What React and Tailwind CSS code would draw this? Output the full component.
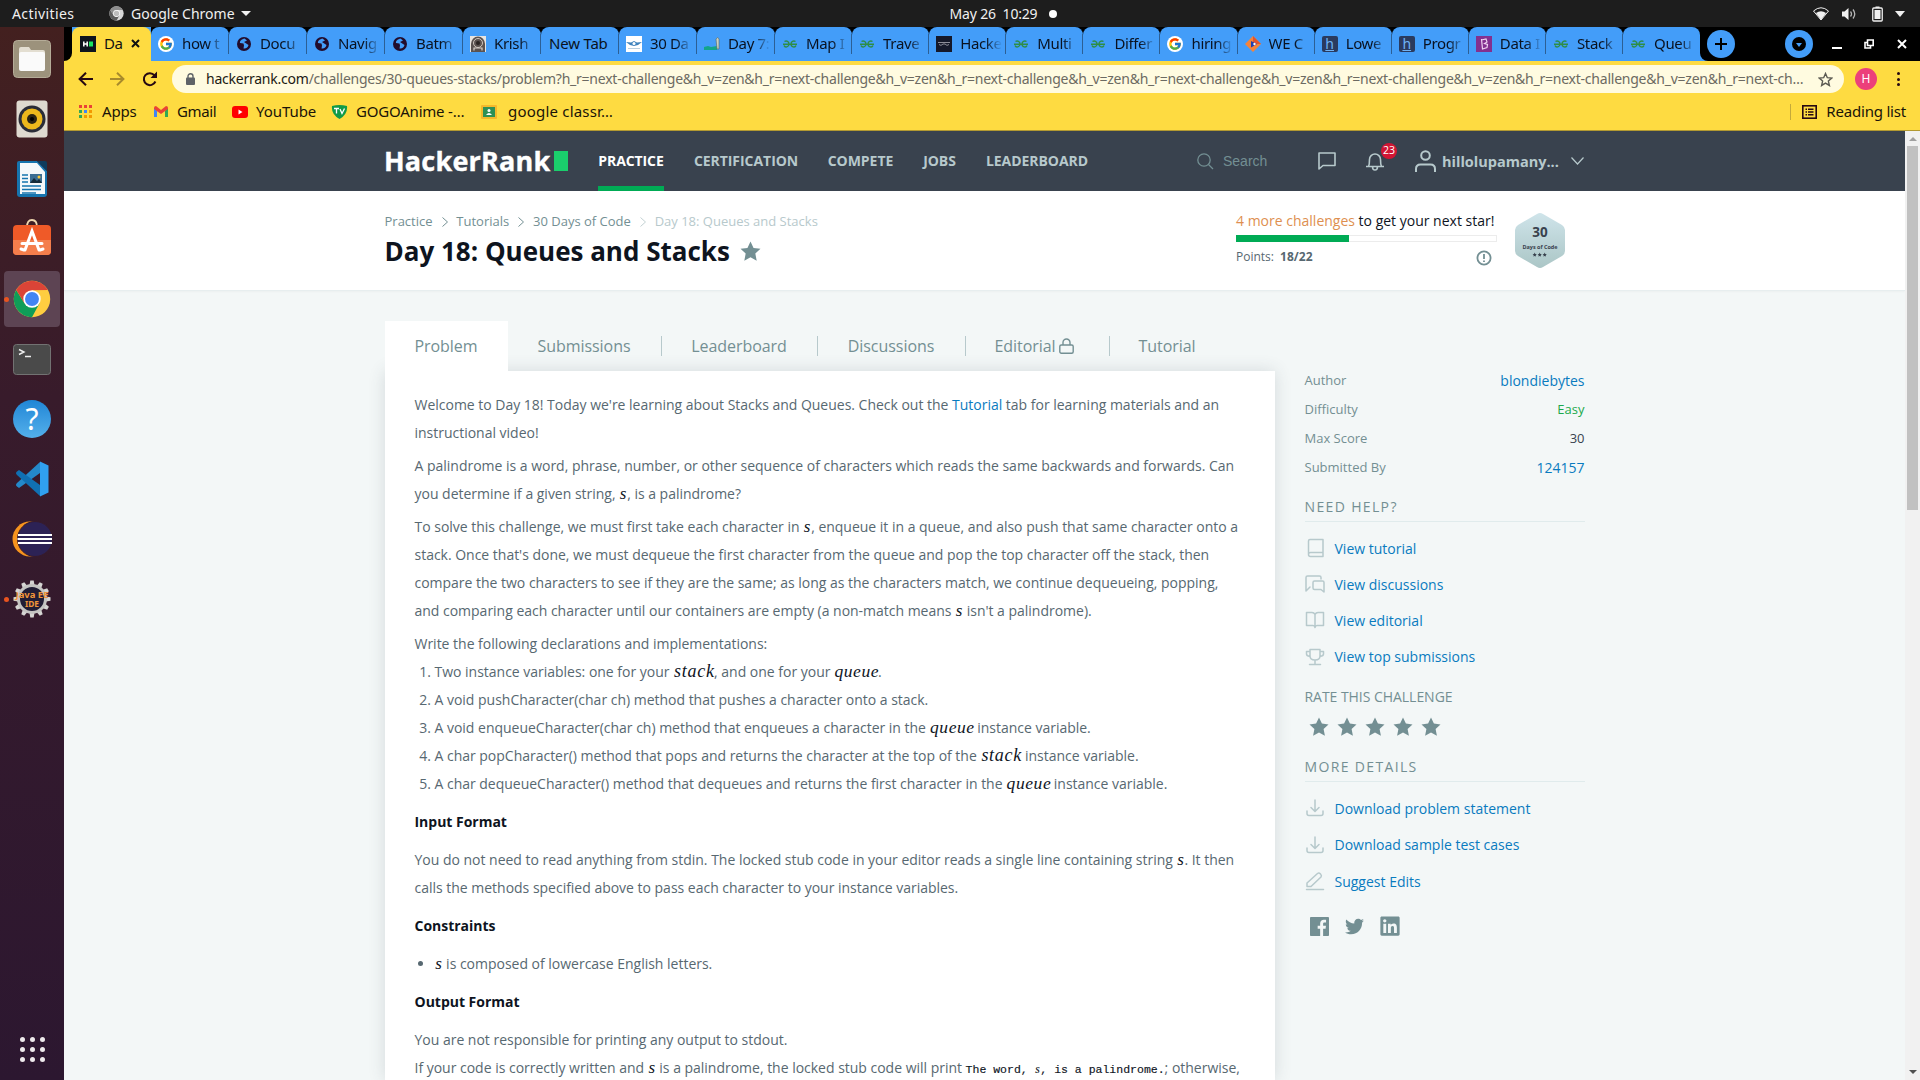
import React from "react";
import { FcGoogle } from "react-icons/fc";
import { FaTwitter, FaLinkedin } from "react-icons/fa";

const UI = "font-['Noto_Sans','Open_Sans',sans-serif]";

function ChromeLogo({ size, gray }) {
  const c = gray ? ["#8c8c8c", "#5c5c5c", "#d8d8d8", "#bdbdbd"] : ["#db4437", "#0f9d58", "#ffcd40", "#4285f4"];
  return (
    <svg width={size} height={size} viewBox="0 0 48 48">
      <circle cx="24" cy="24" r="23" fill={c[2]} />
      <path d="M24 24 L4.1 12.5 A23 23 0 0 1 43.9 12.5 L24 13 Z" fill={c[0]} />
      <path d="M4.1 12.5 A23 23 0 0 0 24 47 L33.5 29.5 L24 34 L14.5 29.5 Z" fill={c[1]} />
      <path d="M4.1 12.5 L14.5 29.5 L24 13.5 Z" fill={c[0]} />
      <circle cx="24" cy="24" r="11" fill="#fff" />
      <circle cx="24" cy="24" r="8.8" fill={c[3]} />
    </svg>
  );
}

function Favicon({ kind }) {
  switch (kind) {
    case "hr":
      return (
        <svg width="16" height="16" viewBox="0 0 16 16"><rect width="16" height="16" fill="#0e141e" /><path d="M3.800 5.500v5M7.200 5.500v5M4 8h3" stroke="#fff" strokeWidth="1.500" /><rect x="9" y="5.500" width="4" height="5" fill="#1ee35f" /></svg>
      );
    case "google":
      return <span className="flex h-4 w-4 items-center justify-center rounded-full bg-white"><FcGoogle size={14} /></span>;
    case "globe":
      return (
        <svg width="16" height="16" viewBox="0 0 16 16"><circle cx="8" cy="8" r="7" fill="#220c2c" /><path d="M8.500 2.500C6 3 3.500 5 4 7l3.500.5.5 2-.5 3c2.500.5 4.500-1 5-3.500L9.500 7 8 6l3-1.500z" fill="#439df9" /></svg>
      );
    case "krishna":
      return (
        <svg width="16" height="16" viewBox="0 0 16 16"><rect width="16" height="16" fill="#e8e4e0" /><path d="M1 16V8a7 7.500 0 0 1 14 0v8z" fill="#5b5250" /><circle cx="8" cy="7" r="4.500" fill="none" stroke="#cfc6c0" /><circle cx="8" cy="7" r="2" fill="#2b2422" /><path d="M4 14.500V12h8v2.500" fill="none" stroke="#d8d0ca" strokeWidth="1.200" /></svg>
      );
    case "wings":
      return (
        <svg width="16" height="16" viewBox="0 0 16 16"><rect width="16" height="16" fill="#fff" /><path d="M0 6l5 .5L8 5l3 1.500L16 6l-4 3-4 1-4-1z" fill="#3f83bd" /><circle cx="8" cy="7.500" r="1.500" fill="#fff" /><path d="M2 12.500h12" stroke="#b9cfe0" /></svg>
      );
    case "tree":
      return (
        <svg width="16" height="16" viewBox="0 0 16 16"><path d="M0 11l4-1 3 1 6-1v4H0z" fill="#12a58a" /><path d="M12 3q2-3 3 0v10h-2z" fill="#c9d3c4" stroke="#57615a" strokeWidth=".6" /></svg>
      );
    case "gfg":
      return (
        <svg width="16" height="16" viewBox="0 0 16 16" fill="none" stroke="#2f8d46" strokeWidth="1.400"><path d="M1 8.300h14M2.500 5.500c2-1.300 4.500 0 4.500 2.500 0 3.200-4 4-5 1.500M13.500 5.500C11.500 4.200 9 5.500 9 8c0 3.200 4 4 5 1.500" /></svg>
      );
    case "dark":
      return (
        <svg width="16" height="16" viewBox="0 0 16 16"><rect width="16" height="16" fill="#15192b" /><path d="M2 6.500h12M3 8.500q2 2 4-.5h2q2 2.500 4 .5" fill="none" stroke="#8c8d99" /></svg>
      );
    case "clan":
      return (
        <svg width="16" height="16" viewBox="0 0 16 16"><path d="M8 0l8 8-8 8-8-8z" fill="#f5833a" /><path d="M8 0v8h8z" fill="#e2542f" /><path d="M6 5l6 3-6 3.500z" fill="#1f3fb0" /><circle cx="9.500" cy="8" r="1.200" fill="#fff" /></svg>
      );
    case "h":
      return (
        <span className="flex h-4 w-4 items-center justify-center rounded-[2px] bg-[#2a3a5e] text-[14px] leading-none text-[#6fb2f5] underline">h</span>
      );
    default:
      return (
        <svg width="16" height="16" viewBox="0 0 16 16"><rect width="16" height="16" fill="#83308f" /><path d="M5.500 3l1 10 4.500-1.500.5-3L8.500 7.500 11 6l-1-3-4.500 1" fill="none" stroke="#f0d4f2" strokeWidth="1.200" /></svg>
      );
  }
}

const tabs = [
  ["google", "how t"], ["globe", "Docu"], ["globe", "Navig"], ["globe", "Batm"], ["krishna", "Krish"], ["", "New Tab"],
  ["wings", "30 Da"], ["tree", "Day 7:"], ["gfg", "Map I"], ["gfg", "Trave"], ["dark", "Hacke"], ["gfg", "Multi"],
  ["gfg", "Differ"], ["google", "hiring"], ["clan", "WE C"], ["h", "Lowe"], ["h", "Progr"], ["b", "Data I"], ["gfg", "Stack"], ["gfg", "Queu"],
];

function TopBar() {
  return (
    <div className="flex h-[27px] items-center justify-between bg-[#1d1d1d] text-[14px] text-[#f0f0f0]">
      <div className="flex w-[640px] items-center pl-3">
        <span className="w-[97px] tracking-[0.4px]">Activities</span>
        <ChromeLogo size={15} gray />
        <span className="ml-[7px] whitespace-nowrap tracking-[0.020px]">Google Chrome</span>
        <span className="ml-1.5 border-x-[5px] border-t-[5px] border-x-transparent border-t-[#f0f0f0]" />
      </div>
      <div className="flex items-center pl-[87px]">
        <span className="whitespace-pre tracking-[-0.2px]">May 26  10:29</span>
        <span className="ml-3 h-2 w-2 rounded-full bg-white" />
      </div>
      <div className="flex w-[640px] items-center justify-end pr-[15px]">
        <svg width="16" height="14" viewBox="0 0 16 14"><path d="M0.500 4Q8-2.500 15.500 4L8 13z" fill="none" stroke="#f0f0f0" /><path d="M3 6Q8 2.500 13 6L8 13z" fill="#f0f0f0" /></svg>
        <svg className="ml-3" width="16" height="14" viewBox="0 0 16 14"><path d="M1 4.500h2.500L7.500 1v12L3.500 9.500H1z" fill="#f0f0f0" /><path d="M9.500 4.500q2 2.500 0 5M12 2.500q3.500 4.500 0 9" fill="none" stroke="#b5b5b5" strokeWidth="1.300" /></svg>
        <svg className="ml-[15px]" width="11" height="16" viewBox="0 0 11 16"><path d="M3.500 2V.5h4V2" fill="#f0f0f0" /><rect x=".75" y="2" width="9.500" height="13" rx="1" fill="none" stroke="#f0f0f0" strokeWidth="1.300" /><rect x="2.500" y="4" width="6" height="9" fill="#f0f0f0" /></svg>
        <span className="ml-3 border-x-[5px] border-t-[6px] border-x-transparent border-t-[#f0f0f0]" />
      </div>
    </div>
  );
}

function DockItem({ children, active, running }) {
  return (
    <div className={`relative flex h-14 w-14 shrink-0 items-center justify-center rounded-[4px] ${active ? "bg-[#5d4453]" : ""}`}>
      {running && <span className="absolute left-0 h-[5px] w-[5px] rounded-full bg-[#e95420]" />}
      {children}
    </div>
  );
}

const GEAR_TEETH = [0, 30, 60, 90, 120, 150, 180, 210, 240, 270, 300, 330];

function Dock() {
  return (
    <aside className="flex w-16 shrink-0 flex-col items-center gap-1 bg-linear-to-b from-[#43201f] via-[#381b2b] via-35% to-[#2c1730] pt-1">
      <DockItem>
        <svg width="38" height="38" viewBox="0 0 38 38"><rect x=".5" y=".5" width="37" height="37" rx="4" fill="#9c927c" stroke="#b5ac98" /><path d="M6 9q0-2 2-2h8l2 3h12q2 0 2 2v16q0 2-2 2H8q-2 0-2-2z" fill="#e3ded1" /><rect x="6" y="12" width="26" height="19" rx="2" fill="#fafafa" /></svg>
      </DockItem>
      <DockItem>
        <svg width="32" height="38" viewBox="0 0 32 38"><rect x=".5" y=".5" width="31" height="37" rx="3" fill="#dedad0" /><circle cx="16" cy="19" r="13.500" fill="#2a2d38" /><circle cx="16" cy="19" r="10.500" fill="#edb81c" /><circle cx="16" cy="19" r="5" fill="#2b2413" /><circle cx="16" cy="19" r="2" fill="#000" /></svg>
      </DockItem>
      <DockItem>
        <svg width="32" height="38" viewBox="0 0 32 38"><path d="M3 1h18l10 10v23q0 3-3 3H4q-3 0-3-3V3q0-2 2-2z" fill="#1674ae" /><path d="M4 3h17l8 9v22H4z" fill="#f5f8fa" /><path d="M21 1h8q2 0 2 2v8z" fill="#0e3b5c" /><path d="M6 15h6M6 18.500h6M6 22h6M6 26h19M6 29.500h19M6 33h14" stroke="#1674ae" strokeWidth="1.500" /><rect x="14" y="14" width="12" height="9" fill="#3b6d92" /><path d="M14 23l4-5 3 3 2-2 3 4z" fill="#152c3b" /><circle cx="23" cy="17" r="1.500" fill="#f9c83a" /></svg>
      </DockItem>
      <DockItem>
        <svg className="mb-1" width="38" height="38" viewBox="0 0 38 38"><path d="M14 9q0-7 5-7t5 7" fill="none" stroke="#f1d9b0" strokeWidth="1.800" /><rect x="0" y="7" width="38" height="30" rx="4" fill="#ef5a28" /><path d="M0 22h38v11q0 4-4 4H4q-4 0-4-4z" fill="#f47e4c" /><path d="M12 32l7-19 7 19M9 25.500h20M8 31l3 1M30 31l-3 1" fill="none" stroke="#fff" strokeWidth="3" strokeLinecap="round" /></svg>
      </DockItem>
      <DockItem active running><ChromeLogo size={38} /></DockItem>
      <DockItem>
        <svg width="38" height="31" viewBox="0 0 38 31"><rect x=".5" y=".5" width="37" height="30" rx="3" fill="#4a4a4a" stroke="#727272" /><path d="M6 5.500l5 2.500-5 2.500M12 12.500h6" fill="none" stroke="#eee" strokeWidth="1.400" /></svg>
      </DockItem>
      <DockItem>
        <div className="flex h-[38px] w-[38px] items-center justify-center rounded-full bg-linear-to-b from-[#1f86d6] to-[#53b0eb] text-[30px] leading-none text-white">?</div>
      </DockItem>
      <DockItem>
        <svg width="36" height="36" viewBox="0 0 36 36"><path d="M26 1L3 22q-2 2 0 3.500l2 1.500 21-15z" fill="#2489ca" /><path d="M3 10.500l2-1.500 21 15v11L3 14q-2-2 0-3.500z" fill="#1070b3" /><path d="M26 .5l8.500 4v27l-8.500 4z" fill="#30a0f0" /></svg>
      </DockItem>
      <DockItem>
        <svg width="40" height="36" viewBox="0 0 40 36"><circle cx="18" cy="18" r="17.500" fill="#f7941e" /><circle cx="23" cy="18" r="17.500" fill="#2c2255" stroke="#381b2b" /><path d="M6 14h34M5.500 18h35M6 22h34" stroke="#fff" strokeWidth="2" /></svg>
      </DockItem>
      <DockItem running>
        <svg width="38" height="38" viewBox="0 0 38 38">
          {GEAR_TEETH.map((a) => <path key={a} transform={`rotate(${a} 19 19)`} d="M16.500 5l.8-4.500h3.400l.8 4.500z" fill="#d5d5d3" />)}
          <circle cx="19" cy="19" r="13.500" fill="#211d35" stroke="#c4c4c2" strokeWidth="3" />
          <text x="19" y="18" textAnchor="middle" fontSize="8.500" fontWeight="700" fill="#f0953a" textLength="33" lengthAdjust="spacingAndGlyphs">Java EE</text>
          <text x="19" y="26.500" textAnchor="middle" fontSize="8.500" fontWeight="700" fill="#f0953a" textLength="14" lengthAdjust="spacingAndGlyphs">IDE</text>
        </svg>
      </DockItem>
      <div className="mt-auto mb-[18px] grid grid-cols-3 gap-[5px]">
        {Array.from({ length: 9 }).map((_, i) => <span key={i} className="h-[5px] w-[5px] rounded-full bg-[#eeeaec]" />)}
      </div>
    </aside>
  );
}

function TabStrip() {
  return (
    <div className="flex h-[34px] bg-black">
      <div className="flex w-2 shrink-0 items-end bg-[#fedb41]"><div className="h-full w-full rounded-br-lg bg-black" /></div>
      <div className="flex w-[79px] shrink-0 bg-[#439df9]">
        <div className="flex w-full items-center rounded-t-lg bg-[#fedb41] pb-px pl-2">
          <Favicon kind="hr" />
          <span className="ml-2 w-[20px] whitespace-nowrap text-[15px] tracking-[-0.4px] text-[#111]">Da</span>
          <svg className="ml-[7px]" width="9" height="9" viewBox="0 0 9 9"><path d="M1 1l7 7M8 1L1 8" stroke="#111" strokeWidth="2" /></svg>
        </div>
      </div>
      {tabs.map(([icon, label], i) => (
        <div key={i} className={`flex shrink-0 items-center rounded-t-lg bg-[#439df9] pb-px ${i < 8 ? "w-[78px]" : "w-[77.1px]"}`}>
          <div className={`flex h-full min-w-0 flex-1 items-center ${icon ? "pl-[7px]" : "pl-[8px]"}`}>
            {icon && <span className="mr-2 shrink-0"><Favicon kind={icon} /></span>}
            <span className={`whitespace-nowrap text-[15px] text-[#0a1220] ${icon ? "w-[43px] [mask-image:linear-gradient(to_right,black_60%,transparent_98%)] tracking-[-0.35px]" : "tracking-[-0.2px]"}`}>{label}</span>
          </div>
          {i < 19 && <div className="h-5 w-px bg-[#2c5f95]" />}
        </div>
      ))}
      <div className="flex w-2 shrink-0 bg-[#439df9]"><div className="h-full w-full rounded-bl-lg bg-black" /></div>
      <div className="flex flex-1 items-center">
        <div className="-ml-px flex h-7 w-7 items-center justify-center rounded-full bg-[#439df9]"><svg width="12" height="12" viewBox="0 0 12 12"><path d="M6 0v12M0 6h12" stroke="#000" strokeWidth="2" /></svg></div>
        <div className="ml-[50px] flex h-7 w-7 items-center justify-center rounded-full bg-[#439df9]"><div className="flex h-3.5 w-3.5 items-center justify-center rounded-full bg-black"><span className="mt-px border-x-[3.5px] border-t-[4.5px] border-x-transparent border-t-[#439df9]" /></div></div>
        <div className="mt-[8px] ml-[19px] h-0.5 w-[10px] bg-white" />
        <svg className="ml-[22px]" width="10" height="10" viewBox="0 0 10 10" fill="none" stroke="#fff" strokeWidth="1.600"><path d="M3.500 1h5.700v5.500H3.500zM3 3.500H1V9h5.500V7" /></svg>
        <svg className="ml-[23px]" width="10" height="10" viewBox="0 0 10 10"><path d="M1 1l8 8M9 1L1 9" stroke="#fff" strokeWidth="2" /></svg>
      </div>
    </div>
  );
}

function Toolbar() {
  return (
    <div className="flex h-9 items-center bg-[#fedb41]">
      <svg className="ml-[14px]" width="15" height="14" viewBox="0 0 15 14" fill="none" stroke="#260812" strokeWidth="2"><path d="M15 7H1.500M8 .8L1.600 7 8 13.200" /></svg>
      <svg className="ml-[17px]" width="15" height="14" viewBox="0 0 15 14" fill="none" stroke="#a88a2c" strokeWidth="2"><path d="M0 7h13.500M7 .8L13.400 7 7 13.200" /></svg>
      <svg className="ml-[17px]" width="16" height="16" viewBox="0 0 16 16"><path d="M13.400 10.500A6 6 0 1 1 12.500 4.300" fill="none" stroke="#260812" strokeWidth="2" /><path d="M15 .5v6.500H8.500z" fill="#260812" /></svg>
      <div className="ml-[14px] flex h-[28px] w-[1672px] items-center rounded-full bg-[#fffbe0] pl-[14px]">
        <svg width="9" height="12" viewBox="0 0 9 12"><rect y="4.500" width="9" height="7.500" rx="1" fill="#5f6368" /><path d="M2 5V3.200a2.500 2.500 0 0 1 5 0V5" fill="none" stroke="#5f6368" strokeWidth="1.400" /></svg>
        <span className="ml-[11px] w-[1600px] pb-0.5 whitespace-nowrap text-[14px] tracking-[-0.234px] text-[#6c6a62]"><span className="text-[#1c1a14]">hackerrank.com</span>/challenges/30-queues-stacks/problem?h_r=next-challenge&amp;h_v=zen&amp;h_r=next-challenge&amp;h_v=zen&amp;h_r=next-challenge&amp;h_v=zen&amp;h_r=next-challenge&amp;h_v=zen&amp;h_r=next-challenge&amp;h_v=zen&amp;h_r=next-challenge&amp;h_v=zen&amp;h_r=next-ch…</span>
        <svg className="ml-[12px] shrink-0" width="15" height="15" viewBox="0 0 24 24" fill="none" stroke="#5c5a52" strokeWidth="2.300"><path d="M12 2.500l2.900 6.600 7.100.7-5.400 4.700 1.600 7L12 17.800l-6.200 3.700 1.600-7L2 9.800l7.100-.7z" /></svg>
      </div>
      <div className="ml-[11px] flex h-[22px] w-[22px] items-center justify-center rounded-full bg-[#ec407a] text-[12px] text-white">H</div>
      <div className="ml-5 flex flex-col gap-[2.500px]">
        {[0, 1, 2].map((i) => <span key={i} className="h-[3px] w-[3px] rounded-full bg-[#260812]" />)}
      </div>
    </div>
  );
}

function Bookmarks() {
  const appColors = ["bg-[#ea4335]", "bg-[#ea4335]", "bg-[#ea4335]", "bg-[#34a853]", "bg-[#4285f4]", "bg-[#f29900]", "bg-[#34a853]", "bg-[#f29900]", "bg-[#f29900]"];
  return (
    <div className="flex h-[34px] items-center border-b border-[#b39a31] bg-[#fedb41] pb-[4px] text-[15px] whitespace-nowrap text-[#1a1408]">
      <div className="ml-[15px] grid grid-cols-3 gap-[2px]">{appColors.map((c, i) => <span key={i} className={`h-[3px] w-[3px] ${c}`} />)}</div>
      <span className="ml-[10px] w-[52px] tracking-[-0.2px]">Apps</span>
      <svg width="14" height="11" viewBox="0 0 14 11"><path d="M0 1.500V11h3V4.500z" fill="#4285f4" /><path d="M14 1.500V11h-3V4.500z" fill="#34a853" /><path d="M0 2Q0 0 2 0l5 4 5-4q2 0 2 2v1L7 8 0 3z" fill="#ea4335" /></svg>
      <span className="ml-[9px] w-[55px] tracking-[-0.4px]">Gmail</span>
      <svg width="16" height="12" viewBox="0 0 16 12"><rect width="16" height="12" rx="3" fill="#f00" /><path d="M6.500 3.500v5L10.500 6z" fill="#fff" /></svg>
      <span className="ml-[8px] w-[75px] tracking-[-0.05px]">YouTube</span>
      <svg width="17" height="14" viewBox="0 0 17 14"><path d="M1 1q7.500-2 15 0 1 8-7.500 13Q0 9 1 1z" fill="#109a48" /><path d="M3 3.500h5M5.500 3.500v5M9 4l2 4.500L13.500 3.500" fill="none" stroke="#fff" strokeWidth="1.300" /></svg>
      <span className="ml-[8px] w-[125px] tracking-[-0.2px]">GOGOAnime -…</span>
      <svg width="16" height="14" viewBox="0 0 16 14"><rect width="16" height="14" rx="1" fill="#f4b92c" /><rect x="2" y="2" width="12" height="10" fill="#2f9155" /><circle cx="8" cy="5.500" r="1.500" fill="#fff" /><path d="M5 10q3-4 6 0z" fill="#fff" /></svg>
      <span className="ml-[11px] tracking-[0.2px]">google classr…</span>
      <div className="ml-auto h-4 w-px bg-[#c4a93b]" />
      <svg className="ml-[11px]" width="15" height="14" viewBox="0 0 15 14"><rect x=".8" y=".8" width="13.400" height="12.400" fill="none" stroke="#260812" strokeWidth="1.600" /><path d="M3.500 4.300h1.500M6 4.300h5.500M3.500 7h1.500M6 7h5.500M3.500 9.700h1.500M6 9.700h5.500" stroke="#260812" strokeWidth="1.400" /></svg>
      <span className="mr-[14px] ml-[9px] tracking-[-0.2px]">Reading list</span>
    </div>
  );
}

function Header() {
  const nav = [["CERTIFICATION", "w-[104px]"], ["COMPETE", "w-[65px]"], ["JOBS", "w-[33px]"], ["LEADERBOARD", "w-[102px]"]];
  return (
    <header className="flex h-[60px] shrink-0 items-center bg-[#39424e] pl-[320px] font-['Open_Sans',sans-serif]">
      <div className="flex items-center text-[27px] font-bold text-white">
        <span className="w-[170px] whitespace-nowrap tracking-[0.2px] [-webkit-text-stroke:0.4px_white]">HackerRank</span>
        <span className="h-5 w-[14px] bg-[#1ace6c]" />
      </div>
      <nav className="ml-[30px] flex h-full items-center gap-[30px] text-[14px] font-bold text-[#b7c9cc]">
        <span className="flex h-full w-[66px] items-center justify-center border-b-[5px] border-[#00ab55] pt-[3px] tracking-[-0.1px] text-white">PRACTICE</span>
        {nav.map(([n, w]) => <span key={n} className={`flex justify-center pb-0.5 tracking-[-0.05px] whitespace-nowrap ${w}`}>{n}</span>)}
      </nav>
      <svg className="ml-[109px]" width="17" height="17" viewBox="0 0 17 17" fill="none" stroke="#738f93" strokeWidth="1.300"><circle cx="7" cy="7" r="6.200" /><path d="M11.500 11.500L16 16" /></svg>
      <span className="ml-[9px] w-[95px] font-['Liberation_Sans',sans-serif] text-[14px] text-[#738f93]">Search</span>
      <svg width="18" height="18" viewBox="0 0 18 18" fill="none" stroke="#b7c9cc" strokeWidth="1.600" strokeLinejoin="round"><path d="M1 1h16v12.500H5L1 17z" /></svg>
      <div className="relative ml-[29px]">
        <svg width="20" height="19" viewBox="0 0 20 19" fill="none" stroke="#b7c9cc" strokeWidth="1.600"><path d="M1 14.500h18M3.500 14.500q1-2 1-7a5.500 5.500 0 0 1 11 0q0 5 1 7M7.500 14.500q0 3.500 2.500 3.500t2.500-3.500" /></svg>
        <span className="absolute -top-[9px] left-[16px] flex h-4 w-4 items-center justify-center rounded-full bg-[#d11534] text-[10.500px] text-white">23</span>
      </div>
      <svg className="ml-[30px]" width="21" height="22" viewBox="0 0 21 22" fill="none" stroke="#b7c9cc" strokeWidth="2"><circle cx="10.500" cy="5.500" r="4.300" /><path d="M1 22v-3q0-4.500 4.500-4.500h10q4.500 0 4.500 4.500v3" /></svg>
      <span className="ml-[6px] w-[129px] pt-px whitespace-nowrap text-[14.5px] font-bold text-[#b7c9cc]">hillolupamany...</span>
      <svg width="13" height="8" viewBox="0 0 13 8" fill="none" stroke="#b7c9cc" strokeWidth="1.200"><path d="M.5.5l6 6.500 6-6.500" /></svg>
    </header>
  );
}

const STAR = "M10 .5l2.900 6.100 6.600.8-4.900 4.600 1.300 6.700L10 15.500l-5.900 3.200L5.400 12 .5 7.400l6.600-.8z";
function Star({ size }) {
  return <svg width={size} height={size} viewBox="0 0 20 20"><path d={STAR} fill="#738f93" /></svg>;
}
function Crumb({ faint }) {
  return <svg className="mr-[8.8px] ml-[9px]" width="6" height="10" viewBox="0 0 6 10" fill="none" stroke={faint ? "#c2d1d3" : "#738f93"}><path d="M.5.500l5 4.500-5 4.500" /></svg>;
}

function TitleBar() {
  return (
    <section className="flex h-[100px] shrink-0 border-b border-[#e7eeef] bg-white pl-[320.5px] shadow-[0_1px_2px_rgba(0,0,0,0.03)]">
      <div className="w-[851.5px] pt-[21px]">
        <div className="flex h-[20px] items-center text-[13px] text-[#738f93]">
          <span>Practice</span><Crumb /><span>Tutorials</span><Crumb /><span>30 Days of Code</span><Crumb faint /><span className="text-[#b7c9cc]">Day 18: Queues and Stacks</span>
        </div>
        <div className="flex h-[38px] items-center text-[26px] font-bold text-[#0e141e]">
          <h1 className="mr-[10px] w-[345px] whitespace-nowrap">Day 18: Queues and Stacks</h1><Star size={21} />
        </div>
      </div>
      <div className="w-[261px] pt-5">
        <div className="h-[24px] text-[14px] leading-5 whitespace-nowrap text-[#0e141e]"><span className="text-[#de8f50]">4 more challenges</span> to get your next star!</div>
        <div className="h-[7px] border border-[#ececec]"><div className="-mt-px -ml-px h-[7px] w-[113px] bg-[#00ab55]" /></div>
        <div className="mt-[5px] flex h-[20px] items-center justify-between pr-[5px] text-[12px] text-[#576871]">
          <span>Points: <b className="ml-[3px] font-bold">18/22</b></span>
          <svg className="mt-[2px]" width="16" height="16" viewBox="0 0 16 16" fill="none" stroke="#738f93" strokeWidth="1.800"><circle cx="8" cy="8" r="6.600" /><path d="M8 4v5M8 10.500v1.500" /></svg>
        </div>
      </div>
      <div className="ml-[18px] pt-[21px]">
        <svg width="50" height="57" viewBox="0 0 50 57">
          <defs><linearGradient id="badge" x1="0" y1="0" x2="0" y2="1"><stop offset="0" stopColor="#cfe4ea" /><stop offset="1" stopColor="#abc6c6" /></linearGradient></defs>
          <path d="M22 2q3-1.800 6 0l19 11q3 2 3 5v21q0 3-3 5L28 55q-3 1.800-6 0L3 44q-3-2-3-5V18q0-3 3-5z" fill="url(#badge)" />
          <text x="25" y="25" textAnchor="middle" fontSize="13.500" fontWeight="700" fill="#39424e">30</text>
          <text x="25" y="37" textAnchor="middle" fontSize="5.500" fontWeight="700" fill="#39424e" textLength="35">Days of Code</text>
          {[15.500, 20.500, 25.500].map((x) => <path key={x} transform={`translate(${x + 2} 40.500) scale(.22)`} d={STAR} fill="#39424e" />)}
        </svg>
      </div>
    </section>
  );
}

function M({ children }) {
  const w = { s: "w-[8px] text-[17px]", stack: "w-[41px] pl-[1.500px] text-[18px] tracking-[0.7px]", queue: "w-[44px] pl-[1.500px] text-[17.5px] tracking-[0.6px]" }[children];
  return <span className={`inline-flex justify-center font-['Liberation_Serif',serif] leading-none text-[#0e141e] italic ${w}`}>{children}</span>;
}

function ProblemTabs() {
  const sep = <span className="h-5 w-px bg-[#b7c9cc]" />;
  return (
    <div className="flex h-[50px] items-center text-[16px] tracking-[-0.04px] whitespace-nowrap text-[#738f93]">
      <span className="relative flex h-full w-[123px] items-center justify-center bg-white">Problem</span>
      <span className="flex w-[153px] justify-center">Submissions</span>{sep}
      <span className="flex w-[155px] justify-center">Leaderboard</span>{sep}
      <span className="flex w-[147px] justify-center">Discussions</span>{sep}
      <span className="flex w-[143px] items-center justify-center gap-[3px] pr-[6px]">Editorial
        <svg width="15" height="16" viewBox="0 0 15 16" fill="none" stroke="#738f93" strokeWidth="1.400"><rect x=".8" y="7" width="13.400" height="8.200" rx="1.500" /><path d="M4 7V4.500a3.500 3.500 0 0 1 7 0V7" /></svg>
      </span>{sep}
      <span className="flex w-[115px] justify-center">Tutorial</span>
    </div>
  );
}

function Problem() {
  const h = "my-[10px] font-bold text-[#0e141e]";
  return (
    <article className="h-[709px] w-[890.5px] bg-white px-[30px] pt-[20px] text-[14px] leading-[28px] tracking-[-0.014px] whitespace-nowrap text-[#576871] shadow-[0_0_16px_rgba(57,66,78,0.16)]">
      <p>Welcome to Day 18! Today we're learning about Stacks and Queues. Check out the <span className="text-[#097bbf]">Tutorial</span> tab for learning materials and an<br />instructional video!</p>
      <p className="mt-[5px]">A palindrome is a word, phrase, number, or other sequence of characters which reads the same backwards and forwards. Can<br />you determine if a given string, <M>s</M>, is a palindrome?</p>
      <p className="mt-[5px]">To solve this challenge, we must first take each character in <M>s</M>, enqueue it in a queue, and also push that same character onto a<br />stack. Once that's done, we must dequeue the first character from the queue and pop the top character off the stack, then<br />compare the two characters to see if they are the same; as long as the characters match, we continue dequeueing, popping,<br />and comparing each character until our containers are empty (a non-match means <M>s</M> isn't a palindrome).</p>
      <p className="mt-[5px]">Write the following declarations and implementations:</p>
      <ol className="list-decimal pl-[20px]">
        <li>Two instance variables: one for your <M>stack</M>, and one for your <M>queue</M>.</li>
        <li>A void pushCharacter(char ch) method that pushes a character onto a stack.</li>
        <li>A void enqueueCharacter(char ch) method that enqueues a character in the <M>queue</M> instance variable.</li>
        <li>A char popCharacter() method that pops and returns the character at the top of the <M>stack</M> instance variable.</li>
        <li>A char dequeueCharacter() method that dequeues and returns the first character in the <M>queue</M> instance variable.</li>
      </ol>
      <h3 className={h}>Input Format</h3>
      <p>You do not need to read anything from stdin. The locked stub code in your editor reads a single line containing string <M>s</M>. It then<br />calls the methods specified above to pass each character to your instance variables.</p>
      <h3 className={h}>Constraints</h3>
      <ul className="list-disc pl-[20px]"><li><M>s</M> is composed of lowercase English letters.</li></ul>
      <h3 className={h}>Output Format</h3>
      <p>You are not responsible for printing any output to stdout.<br />If your code is correctly written and <M>s</M> is a palindrome, the locked stub code will print <span className="inline-flex w-[199px] justify-between font-['Liberation_Mono',monospace] text-[11.500px] leading-none tracking-[0px] whitespace-pre text-[#0e141e] [-webkit-text-stroke:0.15px_#0e141e]">The word, <i className="font-['Liberation_Serif',serif]">s</i>, is a palindrome.</span>; otherwise,</p>
    </article>
  );
}

function Row({ icon, children, tall }) {
  return (
    <div className={`flex items-center text-[14px] text-[#097bbf] ${tall ? "h-[37px]" : "h-[36px]"}`}>
      <svg className="mr-[10px]" width="20" height="20" viewBox="0 0 20 20" fill="none" stroke="#b7c9cc" strokeWidth="1.500" strokeLinejoin="round" strokeLinecap="round">{icon}</svg>
      {children}
    </div>
  );
}

function Sidebar() {
  const info = [["Author", "blondiebytes", "text-[14px] text-[#097bbf]"], ["Difficulty", "Easy", "text-[#1ba94c]"], ["Max Score", "30", "text-[#39424e]"], ["Submitted By", "124157", "text-[14px] text-[#097bbf]"]];
  const dl = <path d="M2 13v2.500q0 2 2 2h12q2 0 2-2V13M10 2v11M6 9.500l4 4 4-4" />;
  return (
    <aside className="ml-[29.5px] w-[280px] pt-[45px]">
      {info.map(([k, v, c]) => (
        <div key={k} className="flex h-[29px] items-center justify-between text-[13px] text-[#738f93]"><span>{k}</span><span className={c}>{v}</span></div>
      ))}
      <div className="mt-[4px] flex h-[36px] items-center border-b border-[#e0ebec] pt-[11px] pb-1.5 text-[14px] tracking-[1.350px] text-[#738f93]">NEED HELP?</div>
      <div className="pt-[8px]">
        <Row icon={<path d="M3.500 16V3q0-1.500 1.500-1.500h13v17H5.500Q3.500 18.500 3.500 16.500q0-2 2-2H18" />}>View tutorial</Row>
        <Row icon={<path d="M5 13l-4 4V3.500Q1 2 2.500 2h12Q16 2 16 3.500V5M8 8.500Q8 7 9.500 7h8Q19 7 19 8.500V18l-3-2.500H9.500Q8 15.500 8 14z" />}>View discussions</Row>
        <Row icon={<path d="M10 4.500Q9 2.500 7 2.500H1.500v13H8q1.500 0 2 2 .500-2 2-2h6.500v-13H13q-2 0-3 2zm0 0v13" />}>View editorial</Row>
        <Row tall icon={<path d="M5 2.500h10V9q0 4-5 4T5 9zM5 4.500H1.500V7q0 2 3.500 2.500M15 4.500h3.500V7q0 2-3.500 2.500M10 13v4.500M4.500 17.500h11" />}>View top submissions</Row>
      </div>
      <div className="mt-[11px] flex h-[20px] items-center text-[14px] tracking-[-0.04px] text-[#738f93]">RATE THIS CHALLENGE</div>
      <div className="mt-[11px] flex h-5 items-center gap-2 pl-[4px]">{[0, 1, 2, 3, 4].map((i) => <Star key={i} size={20} />)}</div>
      <div className="mt-[15px] flex h-[30px] items-center border-b border-[#e0ebec] pb-px text-[14px] tracking-[1.350px] text-[#738f93]">MORE DETAILS</div>
      <div className="pt-[8px]">
        <Row icon={dl}>Download problem statement</Row>
        <Row tall icon={dl}>Download sample test cases</Row>
        <Row icon={<path d="M1.500 18.500h17M2 15.500V12L12.500 2.500q1.500-1 3 .500t.500 3L6 15.500z" />}>Suggest Edits</Row>
      </div>
      <div className="mt-[16px] flex h-[22px] items-center pl-[5.500px] text-[#738f93]">
        <svg width="19" height="19" viewBox="0 0 24 24" fill="currentColor"><path d="M22.675 0h-21.35c-.732 0-1.325.593-1.325 1.325v21.351c0 .731.593 1.324 1.325 1.324h11.495v-9.294h-3.128v-3.622h3.128v-2.671c0-3.1 1.893-4.788 4.659-4.788 1.325 0 2.463.099 2.795.143v3.24l-1.918.001c-1.504 0-1.795.715-1.795 1.763v2.313h3.587l-.467 3.622h-3.12v9.293h6.116c.73 0 1.323-.593 1.323-1.325v-21.35c0-.732-.593-1.325-1.325-1.325z" /></svg>
        <FaTwitter className="ml-[16px]" size={19} /><FaLinkedin className="ml-[15px]" size={22} />
      </div>
    </aside>
  );
}

export default function App() {
  return (
    <div className={`flex h-[1080px] w-[1920px] flex-col overflow-hidden ${UI}`}>
      <TopBar />
      <div className="flex min-h-0 flex-1">
        <Dock />
        <div className="flex min-w-0 flex-1 flex-col">
          <TabStrip />
          <Toolbar />
          <Bookmarks />
          <div className="flex min-h-0 flex-1">
            <main className="flex w-[1841px] flex-col overflow-hidden bg-[#f3f7f7] font-['Open_Sans',sans-serif]">
              <Header />
              <TitleBar />
              <div className="flex pl-[320.5px]">
                <div className="w-[890.5px] pt-[30px]"><ProblemTabs /><Problem /></div>
                <div className="pt-[30px]"><Sidebar /></div>
              </div>
            </main>
            <div className="flex w-[15px] flex-col items-center bg-[#f1f1f1]">
              <span className="mt-1.5 border-x-[4px] border-b-[4px] border-x-transparent border-b-[#a0a0a0]" />
              <div className="mt-[5px] h-[364px] w-[11px] bg-[#c1c1c1]" />
              <span className="mt-auto mb-1.5 border-x-[4px] border-t-[4px] border-x-transparent border-t-[#505050]" />
            </div>
          </div>
        </div>
      </div>
    </div>
  );
}
